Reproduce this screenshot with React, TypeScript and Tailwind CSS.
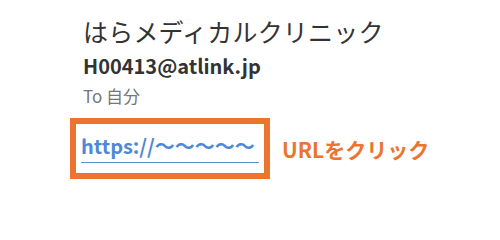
export default function App() {
  return (
    <div
      className="h-[200px] w-[500px] overflow-hidden bg-white"
      style={{ fontFamily: '"Noto Sans CJK JP", "Noto Sans", sans-serif' }}
    >
      <div className="flex flex-col pl-[83px] pt-[16px]">
        <h1 className="text-[25px] leading-[30px] font-normal tracking-[0.2px] text-[#333333]">
          はらメディカルクリニック
        </h1>
        <p className="mt-[8px] text-[20px] leading-[24px] font-bold text-[#333333]">
          H00413@atlink.jp
        </p>
        <p className="mt-[7px] text-[17px] leading-[22px] text-[#777777]">To 自分</p>
      </div>
      <div className="mt-[11px] ml-[70px] flex items-center gap-[12px]">
        <div className="h-[61px] w-[200px] border-[6px] border-[#ec7430] px-[5px] pt-[9px]">
          <a
            href="#"
            className="block border-b border-[#5b8fd6] pb-[3px] text-[20px] leading-[26px] font-bold text-[#4f88d4]"
          >
            https://〜〜〜〜〜
          </a>
        </div>
        <span className="text-[21px] leading-[26px] font-bold text-[#ec7430]">URLをクリック</span>
      </div>
    </div>
  );
}
